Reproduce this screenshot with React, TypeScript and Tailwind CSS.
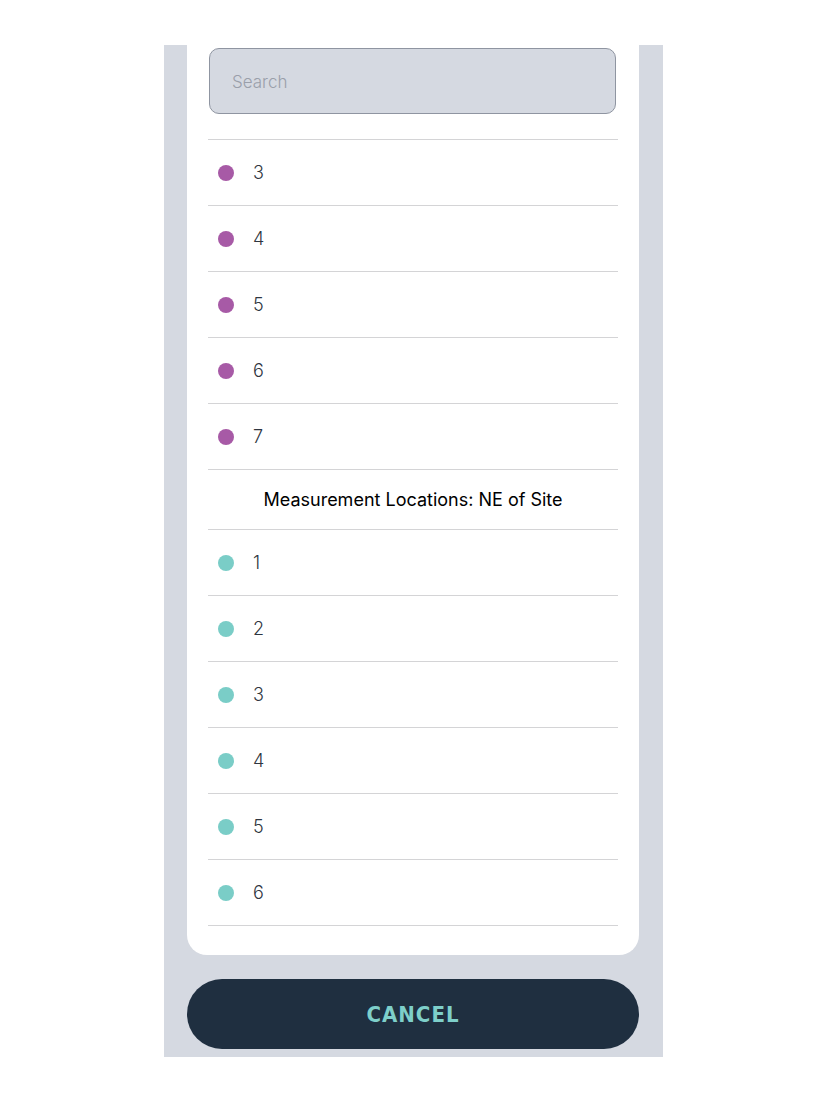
import React from "react";

const groupA = ["3", "4", "5", "6", "7"];
const groupB = ["1", "2", "3", "4", "5", "6"];

const Row = ({ label, dot }: { label: string; dot: string }) => (
  <div className="flex h-[66px] items-center border-b border-[#d4d4d6] pl-[10px]">
    <span className={`h-4 w-4 rounded-full ${dot}`} />
    <span className="ml-[19px] text-[18px] font-light text-[#2f3640]">{label}</span>
  </div>
);

export default function App() {
  return (
    <div className="min-h-[1100px] bg-white pt-[45px] font-['Inter','Liberation_Sans',sans-serif]">
      <div className="ml-[164px] w-[499px] bg-[#d5d9e1] pl-[23px] pr-[24px] pb-[8px]">
        <div className="rounded-b-[20px] bg-white px-[21px] pt-[3px] pb-[29px]">
          <div className="pl-px pr-[2px]">
            <input
              placeholder="Search"
              className="h-[66px] w-full rounded-[10px] border border-[#8f95a1] bg-[#d5d9e1] px-[22px] pt-px text-[17px] font-light text-[#2f3640] outline-none placeholder:text-[#9a9faa]"
            />
          </div>
          <div className="mt-[25px] border-t border-[#d4d4d6]">
            {groupA.map((n) => (
              <Row key={"a" + n} label={n} dot="bg-[#a75aa6]" />
            ))}
            <div className="flex h-[60px] items-center justify-center border-b border-[#d4d4d6] text-[18px] text-black">
              Measurement Locations: NE of Site
            </div>
            {groupB.map((n) => (
              <Row key={"b" + n} label={n} dot="bg-[#7acdc7]" />
            ))}
          </div>
        </div>
        <button className="mt-[24px] flex h-[70px] w-full items-center justify-center rounded-full bg-[#1f2f40] font-['DejaVu_Sans_Condensed','DejaVu_Sans',sans-serif] text-[22px] font-bold tracking-[1px] text-[#7ecfca]">
          CANCEL
        </button>
      </div>
    </div>
  );
}
